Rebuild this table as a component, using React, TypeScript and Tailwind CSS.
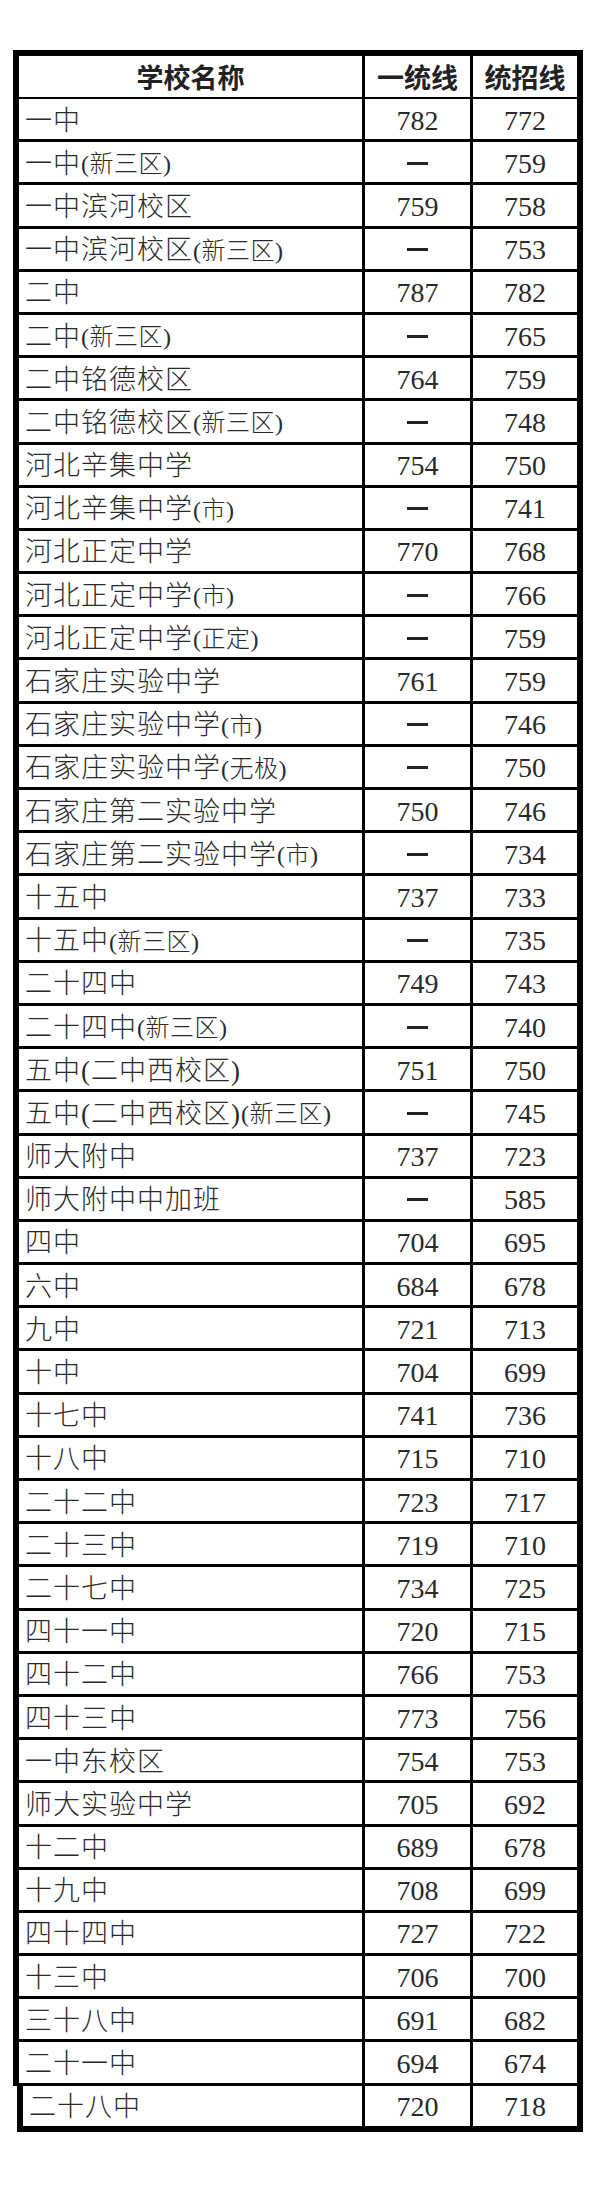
const rows: [string, string, string, string][] = [
  ["一中", "", "782", "772"],
  ["一中", "(新三区)", "—", "759"],
  ["一中滨河校区", "", "759", "758"],
  ["一中滨河校区", "(新三区)", "—", "753"],
  ["二中", "", "787", "782"],
  ["二中", "(新三区)", "—", "765"],
  ["二中铭德校区", "", "764", "759"],
  ["二中铭德校区", "(新三区)", "—", "748"],
  ["河北辛集中学", "", "754", "750"],
  ["河北辛集中学", "(市)", "—", "741"],
  ["河北正定中学", "", "770", "768"],
  ["河北正定中学", "(市)", "—", "766"],
  ["河北正定中学", "(正定)", "—", "759"],
  ["石家庄实验中学", "", "761", "759"],
  ["石家庄实验中学", "(市)", "—", "746"],
  ["石家庄实验中学", "(无极)", "—", "750"],
  ["石家庄第二实验中学", "", "750", "746"],
  ["石家庄第二实验中学", "(市)", "—", "734"],
  ["十五中", "", "737", "733"],
  ["十五中", "(新三区)", "—", "735"],
  ["二十四中", "", "749", "743"],
  ["二十四中", "(新三区)", "—", "740"],
  ["五中(二中西校区)", "", "751", "750"],
  ["五中(二中西校区)", "(新三区)", "—", "745"],
  ["师大附中", "", "737", "723"],
  ["师大附中中加班", "", "—", "585"],
  ["四中", "", "704", "695"],
  ["六中", "", "684", "678"],
  ["九中", "", "721", "713"],
  ["十中", "", "704", "699"],
  ["十七中", "", "741", "736"],
  ["十八中", "", "715", "710"],
  ["二十二中", "", "723", "717"],
  ["二十三中", "", "719", "710"],
  ["二十七中", "", "734", "725"],
  ["四十一中", "", "720", "715"],
  ["四十二中", "", "766", "753"],
  ["四十三中", "", "773", "756"],
  ["一中东校区", "", "754", "753"],
  ["师大实验中学", "", "705", "692"],
  ["十二中", "", "689", "678"],
  ["十九中", "", "708", "699"],
  ["四十四中", "", "727", "722"],
  ["十三中", "", "706", "700"],
  ["三十八中", "", "691", "682"],
  ["二十一中", "", "694", "674"],
  ["二十八中", "", "720", "718"],
];

const cjk = { fontFamily: '"Liberation Serif", "Noto Sans CJK SC", serif' };

function Score({ value }: { value: string }) {
  if (value === "—") {
    return <span className="block w-[21px] h-[3px] bg-[#222] mt-[2px]" />;
  }
  return (
    <span className="text-[28px] leading-none text-[#2a2a2a] pt-[3px]" style={{ fontFamily: '"Liberation Serif", serif' }}>
      {value}
    </span>
  );
}

function Row({ r, last }: { r: [string, string, string, string]; last?: boolean }) {
  const [name, suffix, a, b] = r;
  return (
    <div className={`grid gap-x-[3px] h-[40.2px] ${last ? "grid-cols-[339px_105px_104px]" : "grid-cols-[343px_105px_104px]"}`}>
      <div className="bg-white flex items-center pl-[6px] pt-[4px] text-[#2a2a2a] whitespace-nowrap" style={cjk}>
        <span className="text-[27px] font-light tracking-[1px] leading-none">{name}</span>
        {suffix && <span className="text-[24px] font-light tracking-[0.5px] leading-none">{suffix}</span>}
      </div>
      <div className="bg-white flex items-center justify-center">
        <Score value={a} />
      </div>
      <div className="bg-white flex items-center justify-center">
        <Score value={b} />
      </div>
    </div>
  );
}

export default function App() {
  const body = rows.slice(0, rows.length - 1);
  const tail = rows[rows.length - 1];
  return (
    <div className="w-[606px] h-[2197px] bg-white pt-[50px] pl-[13px]">
      <div className="w-[570px] flex flex-col bg-black">
        <div className="flex flex-col gap-y-[3px] border-[6px] border-b-[3px] border-black">
          {/* header */}
          <div className="grid grid-cols-[343px_105px_104px] gap-x-[3px] h-[41px] -mb-[1px]">
            {["学校名称", "一统线", "统招线"].map((h) => (
              <div
                key={h}
                className="bg-white flex items-center justify-center text-[27px] font-bold text-[#222] leading-none"
                style={{ fontFamily: '"Noto Sans CJK SC", sans-serif' }}
              >
                {h}
              </div>
            ))}
          </div>
          {body.map((r) => (
            <Row key={r[0] + r[1]} r={r} />
          ))}
        </div>
      </div>
      {/* last row, slightly offset like the scanned sheet */}
      <div className="w-[566px] ml-[4px] bg-black border-[6px] border-t-0 border-black">
        <Row r={tail} last />
      </div>
    </div>
  );
}
